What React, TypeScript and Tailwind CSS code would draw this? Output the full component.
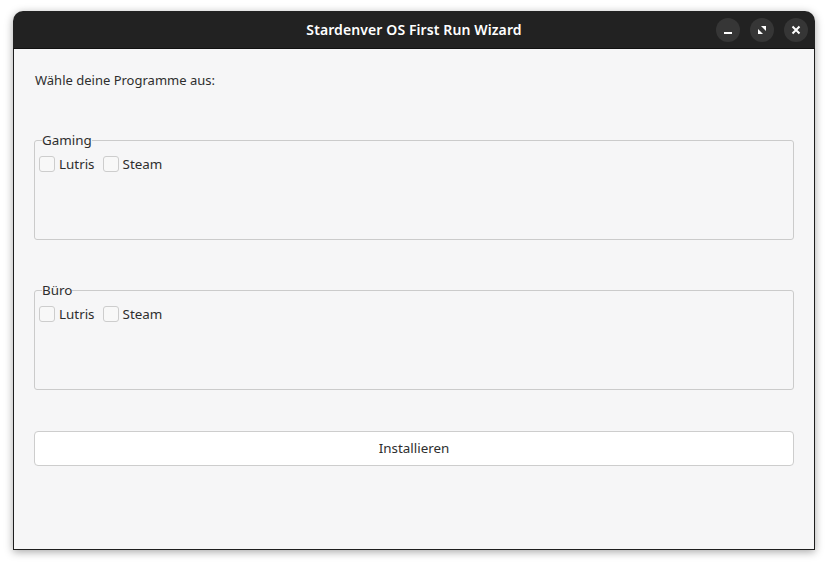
import React from "react";

const font = { fontFamily: '"Noto Sans", "Open Sans", sans-serif' };

const CheckItem = ({ label }: { label: string }) => (
  <label className="flex items-center gap-[4px] text-[13.4px] text-[#2e2e2e]">
    <span className="w-[16px] h-[16px] rounded-[3px] border border-[#cdcdcd] bg-[#f8f8f8]" />
    {label}
  </label>
);

const Group = ({ title }: { title: string }) => (
  <fieldset className="h-[109px] border border-[#cbcbcb] rounded-[3px] px-[4px]">
    <legend className="ml-[3px] text-[13.4px] leading-[18px] text-[#2e2e2e]">{title}</legend>
    <div className="flex gap-[8px] mt-[5px]">
      <CheckItem label="Lutris" />
      <CheckItem label="Steam" />
    </div>
  </fieldset>
);

const WinButton = ({ children }: { children: React.ReactNode }) => (
  <div className="w-[24px] h-[24px] rounded-full bg-[#363636] flex items-center justify-center">
    {children}
  </div>
);

export default function App() {
  return (
    <div className="w-[828px] h-[566px] bg-white pl-[13px] pt-[11px]" style={font}>
      <div className="w-[802px] h-[539px] flex flex-col rounded-t-[10px] overflow-hidden shadow-[0_2px_8px_rgba(0,0,0,0.35)]">
        {/* Title bar */}
        <div className="h-[38px] bg-[#222222] border-b border-[#111] flex items-center relative">
          <div className="flex-1 text-center text-white text-[14px] font-semibold tracking-[0.1px]">
            Stardenver OS First Run Wizard
          </div>
          <div className="absolute right-[7px] top-[7px] flex gap-[10px]">
            <WinButton>
              <svg width="10" height="10" viewBox="0 0 10 10">
                <rect x="1" y="7" width="8" height="2" fill="#fff" />
              </svg>
            </WinButton>
            <WinButton>
              <svg width="10" height="10" viewBox="0 0 10 10">
                <path d="M4 1H9V6Z" fill="#fff" />
                <path d="M1 4V9H6Z" fill="#fff" />
              </svg>
            </WinButton>
            <WinButton>
              <svg width="10" height="10" viewBox="0 0 10 10">
                <path d="M1.5 1.5L8.5 8.5M8.5 1.5L1.5 8.5" stroke="#fff" strokeWidth="2" />
              </svg>
            </WinButton>
          </div>
        </div>
        {/* Content */}
        <div className="flex-1 bg-[#f6f6f7] border-x border-b border-[#1e1e1e] px-[20px] pt-[22px]">
          <p className="text-[13px] leading-[18px] text-[#2e2e2e] pl-[1px]">Wähle deine Programme aus:</p>
          <div className="mt-[42px]">
            <Group title="Gaming" />
          </div>
          <div className="mt-[41px]">
            <Group title="Büro" />
          </div>
          <button className="mt-[41px] w-full h-[35px] bg-white border border-[#cdcdcd] rounded-[4px] text-[13.4px] text-[#2e2e2e]">
            Installieren
          </button>
        </div>
      </div>
    </div>
  );
}
